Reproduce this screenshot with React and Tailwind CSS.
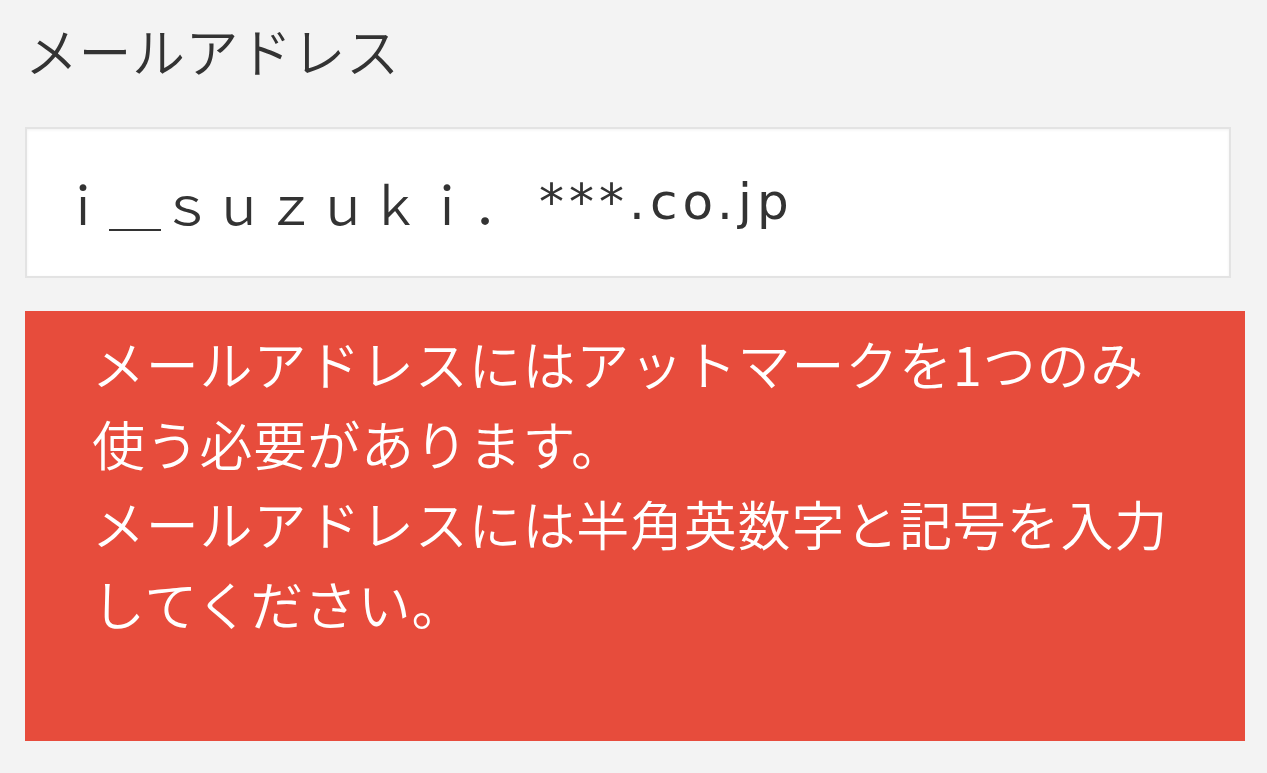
import React from "react";

const App = () => {
  const lines = [
    "メールアドレスにはアットマークを1つのみ",
    "使う必要があります。",
    "メールアドレスには半角英数字と記号を入力",
    "してください。",
  ];

  return (
    <div
      className="w-screen h-screen bg-[#f3f3f3] pl-[25px] pt-[10px] overflow-hidden"
      style={{ fontFamily: '"Noto Sans CJK JP", "Noto Sans", sans-serif' }}
    >
      <div className="text-[53px] leading-[80px] h-[80px] font-[350] tracking-[0.5px] text-[#333333]">
        メールアドレス
      </div>

      <div className="mt-[37px] w-[1206px] h-[151px] bg-white border-2 border-[#e3e3e3] shadow-[inset_0_1px_3px_rgba(0,0,0,0.06)] flex items-center pl-[30px] text-[52px] text-[#333333] whitespace-nowrap">
        <span className="font-[350]">ｉ＿ｓｕｚｕｋｉ．</span>
        <span
          className="ml-[14px] text-[50px] tracking-[5px]"
          style={{ fontFamily: 'Verdana, "DejaVu Sans", "Noto Sans", sans-serif' }}
        >
          ***.co.jp
        </span>
      </div>

      <div className="mt-[33px] w-[1220px] h-[430px] bg-[#e74c3c] pl-[67px] pt-[12px] text-white text-[53px] leading-[80px] font-[350] tracking-[0.8px]">
        {lines.map((line, i) => (
          <div key={i} className="whitespace-nowrap">
            {line}
          </div>
        ))}
      </div>
    </div>
  );
};

export default App;
